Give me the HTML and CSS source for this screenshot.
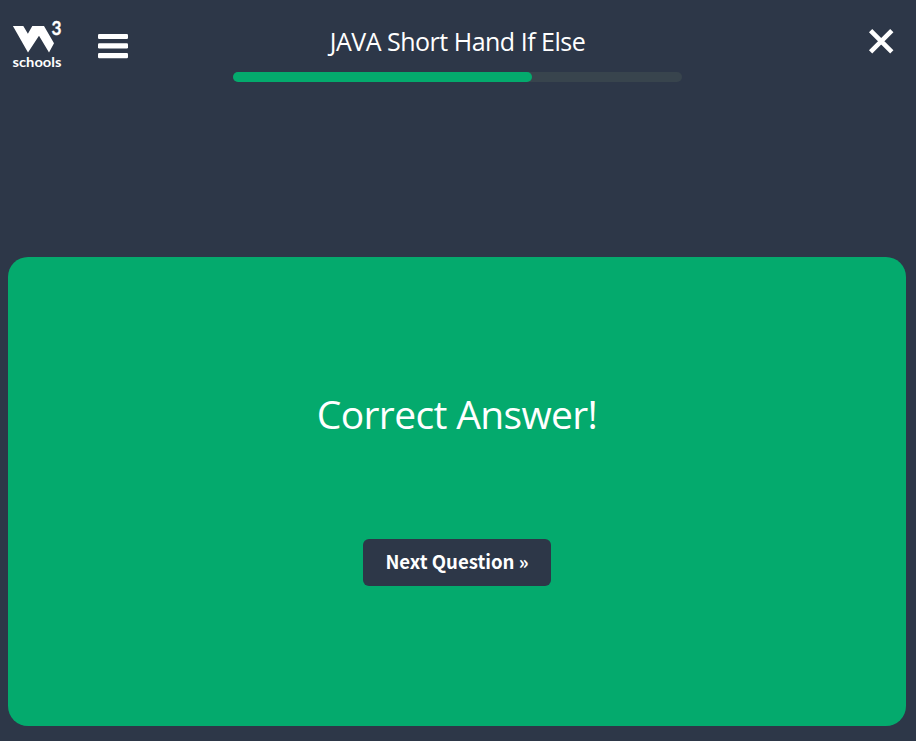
FILE: index.html
```html
<!DOCTYPE html>
<html lang="en">
<head>
<meta charset="utf-8">
<title>JAVA Short Hand If Else</title>
<link rel="stylesheet" href="styles.css">
</head>
<body>
<header class="topbar">
  <div class="brand">
    <svg class="logo" viewBox="0 0 60 60" role="img" aria-label="W3Schools">
      <path d="M4.9 12H15.3L19.9 19.8L24.3 12H36L46 29.3L41 38.6L31 21.8L20 38.6Z" fill="#fff"/>
      <text class="logo-three" x="43.6" y="21" textLength="10" lengthAdjust="spacingAndGlyphs">3</text>
      <text class="logo-name" x="4.6" y="53" textLength="48.8" lengthAdjust="spacingAndGlyphs">schools</text>
    </svg>
    <svg class="menu" viewBox="0 0 30 26" aria-hidden="true">
      <rect width="30" height="5" rx="1.2" y="0"/>
      <rect width="30" height="5.2" rx="1.2" y="9.3"/>
      <rect width="30" height="5.3" rx="1.2" y="19"/>
    </svg>
  </div>
  <div class="heading">
    <h1 class="title">JAVA Short Hand If Else</h1>
    <div class="progress"><div class="progress-fill"></div></div>
  </div>
  <svg class="close" viewBox="0 0 26 26" aria-hidden="true">
    <path d="M2.6 2.6L23.8 23.8M23.8 2.6L2.6 23.8"/>
  </svg>
</header>
<main class="result">
  <h2 class="message">Correct Answer!</h2>
  <button class="next">Next Question »</button>
</main>
</body>
</html>
```
FILE: styles.css
```css
* { box-sizing: border-box; }

body {
  margin: 0;
  height: 741px;
  padding: 0 10px 15px 8px;
  overflow: hidden;
  display: flex;
  flex-direction: column;
  background: #2d3748;
  color: #fff;
  font-family: "Open Sans", "Noto Sans", sans-serif;
}

.topbar {
  height: 257px;
  flex: none;
  display: grid;
  grid-template-columns: 225px 449px 1fr;
  align-items: start;
}

.brand { display: flex; }

.logo {
  width: 60px;
  height: 60px;
  margin-top: 14px;
  overflow: visible;
  fill: #fff;
}

.logo-three {
  font: 700 18px "Lato", sans-serif;
  stroke: #fff;
  stroke-width: 0.3;
}
.logo-name { font: 700 13px "Lato", sans-serif; }

.menu {
  width: 30px;
  height: 26px;
  margin: 34px 0 0 30.4px;
  fill: #fff;
}

.title {
  margin: 24px 0 0;
  height: 48px;
  font-size: 25px;
  font-weight: 400;
  line-height: 35px;
  letter-spacing: -0.5px;
  text-align: center;
  white-space: nowrap;
}

.progress {
  height: 10px;
  border-radius: 5px;
  background: #38444d;
}

.progress-fill {
  width: 299px;
  height: 10px;
  border-radius: 5px;
  background: #04aa6d;
}

.close {
  justify-self: end;
  width: 26px;
  height: 26px;
  margin: 28px 12px 0 0;
  fill: none;
  stroke: #fff;
  stroke-width: 4.6;
}

.result {
  height: 469px;
  flex: none;
  display: flex;
  flex-direction: column;
  align-items: center;
  padding-top: 130px;
  border-radius: 20px;
  background: #04aa6d;
}

.message {
  margin: 0 0 98px;
  font-size: 39px;
  font-weight: 400;
  line-height: 54px;
  letter-spacing: -0.65px;
  white-space: nowrap;
}

.next {
  width: 188px;
  height: 47px;
  padding: 0 0 4px;
  border: 0;
  border-radius: 6px;
  background: #2d3748;
  color: #fff;
  font: 700 18.6px/43px "Noto Sans CJK SC", sans-serif;
  white-space: nowrap;
}
```
